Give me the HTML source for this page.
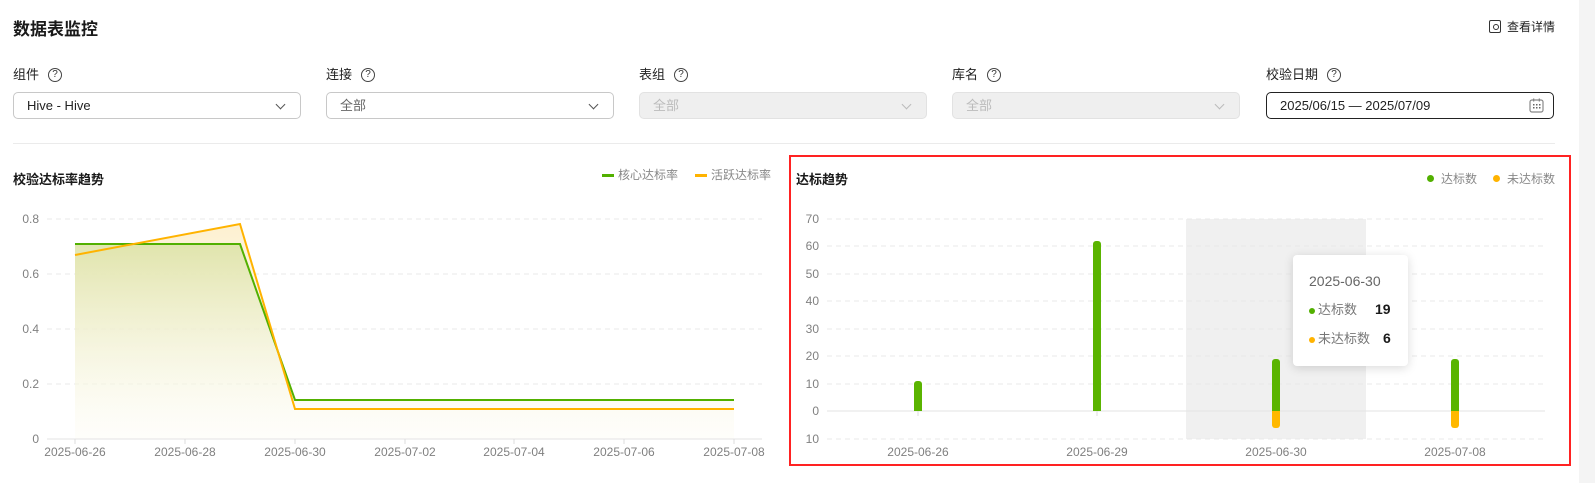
<!DOCTYPE html>
<html><head><meta charset="utf-8"><style>
*{box-sizing:border-box;margin:0;padding:0}
body{width:1595px;height:483px;background:#fff;font-family:"Liberation Sans","Noto Sans CJK SC",sans-serif;color:#1a1a1a;position:relative;overflow:hidden}
.abs{position:absolute}
.lbl{position:absolute;top:66px;font-size:13px;line-height:18px;color:#222;display:flex;align-items:center}
.q{display:inline-block;width:14px;height:14px;border:1.1px solid #444;border-radius:50%;font-size:10px;line-height:12px;text-align:center;margin-left:9px;color:#333}
.sel{position:absolute;top:92px;width:288px;height:27px;border:1px solid #c8c8c8;border-radius:5px;font-size:13px;line-height:25px;padding-left:13px;color:#222}
.sel.dis{background:#efefef;border-color:#e2e2e2;color:#bbb}
.chev{position:absolute;right:16px;top:8px;width:7px;height:7px;border-right:1.1px solid #555;border-bottom:1.1px solid #555;transform:rotate(45deg)}
.dis .chev{border-color:#bbb}
</style></head><body>
<div class="abs" style="left:13px;top:18px;font-size:17px;font-weight:bold;line-height:24px">数据表监控</div>
<div class="abs" style="left:1489px;top:20px;width:12px;height:13px;border:1.4px solid #333;border-radius:2px"></div>
<div class="abs" style="left:1493px;top:24px;width:6px;height:6px;border:1.3px solid #333;border-radius:50%;background:#fff"></div>
<div class="abs" style="left:1507px;top:18px;font-size:12px;line-height:18px;color:#222">查看详情</div>

<div class="lbl" style="left:13px">组件<span class="q">?</span></div>
<div class="lbl" style="left:326px">连接<span class="q">?</span></div>
<div class="lbl" style="left:639px">表组<span class="q">?</span></div>
<div class="lbl" style="left:952px">库名<span class="q">?</span></div>
<div class="lbl" style="left:1266px">校验日期<span class="q">?</span></div>
<div class="sel" style="left:13px">Hive - Hive<span class="chev"></span></div>
<div class="sel" style="left:326px;color:#666">全部<span class="chev"></span></div>
<div class="sel dis" style="left:639px">全部<span class="chev"></span></div>
<div class="sel dis" style="left:952px">全部<span class="chev"></span></div>
<div class="sel" style="left:1266px;border-color:#222">2025/06/15 — 2025/07/09
<svg class="abs" style="right:9px;top:5px" width="15" height="15" viewBox="0 0 15 15"><rect x="1" y="2" width="13" height="12" rx="2" fill="none" stroke="#888" stroke-width="1.2"/><g fill="#666"><rect x="4" y="6" width="1.5" height="1.5"/><rect x="7" y="6" width="1.5" height="1.5"/><rect x="10" y="6" width="1.5" height="1.5"/><rect x="4" y="9" width="1.5" height="1.5"/><rect x="7" y="9" width="1.5" height="1.5"/><rect x="10" y="9" width="1.5" height="1.5"/></g><rect x="4" y="0.5" width="1.3" height="3" fill="#888"/><rect x="9.7" y="0.5" width="1.3" height="3" fill="#888"/></svg></div>
<div class="abs" style="left:13px;top:143px;width:1542px;height:1px;background:#ebebeb"></div>
<div class="abs" style="left:1579px;top:0;width:16px;height:483px;background:#f4f4f4"></div>

<div class="abs" style="left:13px;top:171px;font-size:13px;font-weight:bold;line-height:18px">校验达标率趋势</div>
<div class="abs" style="left:602px;top:174px;width:12px;height:2.5px;background:#52b000"></div>
<div class="abs" style="left:618px;top:166px;font-size:12px;color:#888">核心达标率</div>
<div class="abs" style="left:695px;top:174px;width:12px;height:2.5px;background:#ffb300"></div>
<div class="abs" style="left:711px;top:166px;font-size:12px;color:#888">活跃达标率</div>

<svg class="abs" style="left:0;top:0" width="780" height="483">
<defs><linearGradient id="g" x1="0" y1="0" x2="0" y2="1"><stop offset="0" stop-color="#dde3a8" stop-opacity=".9"/><stop offset="1" stop-color="#f8f9ec" stop-opacity=".1"/></linearGradient>
<linearGradient id="y" x1="0" y1="0" x2="0" y2="1"><stop offset="0" stop-color="#fdf0d0"/><stop offset="1" stop-color="#fffdf7" stop-opacity=".3"/></linearGradient></defs>
<g stroke="#e8e8e8" stroke-dasharray="5,4"><line x1="47" y1="219" x2="762" y2="219"/><line x1="47" y1="274" x2="762" y2="274"/><line x1="47" y1="329" x2="762" y2="329"/><line x1="47" y1="384" x2="762" y2="384"/></g>
<polygon points="75,255 240,224 295,409 734,409 734,439 75,439" fill="url(#y)"/>
<polygon points="75,244 240,244 295,400 734,400 734,439 75,439" fill="url(#g)"/>
<line x1="47" y1="439" x2="762" y2="439" stroke="#e3e3e3"/>
<polyline points="75,244 240,244 295,400 734,400" fill="none" stroke="#52b000" stroke-width="2"/>
<polyline points="75,255 240,224 295,409 734,409" fill="none" stroke="#ffb300" stroke-width="2"/>
<g stroke="#ddd"><line x1="75" y1="439" x2="75" y2="444"/><line x1="185" y1="439" x2="185" y2="444"/><line x1="295" y1="439" x2="295" y2="444"/><line x1="405" y1="439" x2="405" y2="444"/><line x1="514" y1="439" x2="514" y2="444"/><line x1="624" y1="439" x2="624" y2="444"/><line x1="734" y1="439" x2="734" y2="444"/></g>
<g font-size="12" fill="#808080" font-family="Liberation Sans,sans-serif" text-anchor="end"><text x="39" y="223">0.8</text><text x="39" y="278">0.6</text><text x="39" y="333">0.4</text><text x="39" y="388">0.2</text><text x="39" y="443">0</text></g>
<g font-size="12" fill="#808080" font-family="Liberation Sans,sans-serif" text-anchor="middle"><text x="75" y="456">2025-06-26</text><text x="185" y="456">2025-06-28</text><text x="295" y="456">2025-06-30</text><text x="405" y="456">2025-07-02</text><text x="514" y="456">2025-07-04</text><text x="624" y="456">2025-07-06</text><text x="734" y="456">2025-07-08</text></g>
</svg>

<div class="abs" style="left:789px;top:155px;width:782px;height:311px;border:2px solid #f22"></div>
<div class="abs" style="left:796px;top:171px;font-size:13px;font-weight:bold;line-height:18px">达标趋势</div>
<div class="abs" style="left:1427px;top:175px;width:7px;height:7px;border-radius:50%;background:#52b000"></div>
<div class="abs" style="left:1441px;top:170px;font-size:12px;color:#888">达标数</div>
<div class="abs" style="left:1493px;top:175px;width:7px;height:7px;border-radius:50%;background:#ffb300"></div>
<div class="abs" style="left:1507px;top:170px;font-size:12px;color:#888">未达标数</div>

<svg class="abs" style="left:0;top:0" width="1579" height="483">
<rect x="1186" y="219" width="180" height="220" fill="#f0f0f0"/>
<g stroke="#e8e8e8" stroke-dasharray="5,4"><line x1="827" y1="219" x2="1545" y2="219"/><line x1="827" y1="246" x2="1545" y2="246"/><line x1="827" y1="274" x2="1545" y2="274"/><line x1="827" y1="301" x2="1545" y2="301"/><line x1="827" y1="329" x2="1545" y2="329"/><line x1="827" y1="356" x2="1545" y2="356"/><line x1="827" y1="384" x2="1545" y2="384"/><line x1="827" y1="439" x2="1545" y2="439"/></g>
<line x1="827" y1="411" x2="1545" y2="411" stroke="#e3e3e3"/>
<g font-size="12" fill="#808080" font-family="Liberation Sans,sans-serif" text-anchor="end"><text x="819" y="223">70</text><text x="819" y="250">60</text><text x="819" y="278">50</text><text x="819" y="305">40</text><text x="819" y="333">30</text><text x="819" y="360">20</text><text x="819" y="388">10</text><text x="819" y="415">0</text><text x="819" y="443">10</text></g>
<g stroke="#ddd"><line x1="918" y1="411" x2="918" y2="416"/><line x1="1097" y1="411" x2="1097" y2="416"/></g>
<g fill="#5ab400"><rect x="914" y="381" width="8" height="30" rx="3"/><rect x="914" y="405" width="8" height="6"/>
<rect x="1093" y="241" width="8" height="170" rx="3"/><rect x="1093" y="400" width="8" height="11"/>
<rect x="1272" y="359" width="8" height="52" rx="3"/><rect x="1272" y="400" width="8" height="11"/>
<rect x="1451" y="359" width="8" height="52" rx="3"/><rect x="1451" y="400" width="8" height="11"/></g>
<g fill="#ffb800"><rect x="1272" y="411" width="8" height="17" rx="3"/><rect x="1272" y="411" width="8" height="8"/><rect x="1451" y="411" width="8" height="17" rx="3"/><rect x="1451" y="411" width="8" height="8"/></g>
<g font-size="12" fill="#808080" font-family="Liberation Sans,sans-serif" text-anchor="middle"><text x="918" y="456">2025-06-26</text><text x="1097" y="456">2025-06-29</text><text x="1276" y="456">2025-06-30</text><text x="1455" y="456">2025-07-08</text></g>
</svg>

<div class="abs" style="left:1293px;top:255px;width:115px;height:111px;background:#fff;border-radius:4px;box-shadow:0 2px 10px rgba(0,0,0,.15)"></div>
<div class="abs" style="left:1309px;top:272px;font-size:14px;color:#666;line-height:18px">2025-06-30</div>
<div class="abs" style="left:1309px;top:308px;width:6px;height:6px;border-radius:50%;background:#52b000"></div>
<div class="abs" style="left:1318px;top:301px;font-size:13px;color:#777;line-height:18px">达标数</div>
<div class="abs" style="left:1375px;top:300px;font-size:14px;font-weight:bold;line-height:18px">19</div>
<div class="abs" style="left:1309px;top:337px;width:6px;height:6px;border-radius:50%;background:#ffb300"></div>
<div class="abs" style="left:1318px;top:330px;font-size:13px;color:#777;line-height:18px">未达标数</div>
<div class="abs" style="left:1383px;top:329px;font-size:14px;font-weight:bold;line-height:18px">6</div>
</body></html>
